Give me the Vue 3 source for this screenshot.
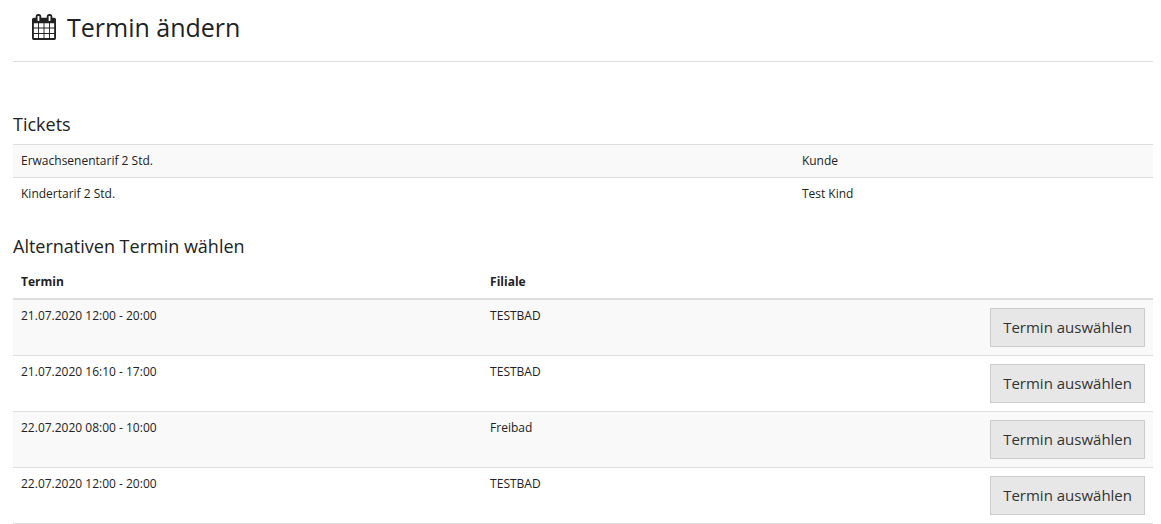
<script setup>
import { ref } from 'vue';

const tickets = ref([
  { id: 1, tarif: 'Erwachsenentarif 2 Std.', person: 'Kunde' },
  { id: 2, tarif: 'Kindertarif 2 Std.', person: 'Test Kind' }
]);

const termine = ref([
  { id: 1, zeit: '21.07.2020 12:00 - 20:00', filiale: 'TESTBAD' },
  { id: 2, zeit: '21.07.2020 16:10 - 17:00', filiale: 'TESTBAD' },
  { id: 3, zeit: '22.07.2020 08:00 - 10:00', filiale: 'Freibad' },
  { id: 4, zeit: '22.07.2020 12:00 - 20:00', filiale: 'TESTBAD' }
]);

const selectedTermin = ref(null);

const selectTermin = (termin) => {
  selectedTermin.value = termin.id;
};
</script>

<template>
  <main class="page">
    <header class="page-header">
      <svg class="calendar-icon" viewBox="64 0 1664 1792" aria-hidden="true">
        <path
          fill="currentColor"
          d="M192 1664h288v-288h-288v288zm352 0h320v-288h-320v288zm-352-352h288v-320h-288v320zm352 0h320v-320h-320v320zm-352-384h288v-288h-288v288zm736 736h320v-288h-320v288zm-384-736h320v-288h-320v288zm768 736h288v-288h-288v288zm-384-352h320v-320h-320v320zm-352-864v-288q0-13-9.500-22.500t-22.500-9.500h-64q-13 0-22.500 9.500t-9.500 22.500v288q0 13 9.500 22.500t22.500 9.500h64q13 0 22.500-9.500t9.500-22.500zm736 864h288v-320h-288v320zm-384-384h320v-288h-320v288zm384 0h288v-288h-288v288zm32-480v-288q0-13-9.500-22.500t-22.500-9.500h-64q-13 0-22.500 9.500t-9.500 22.500v288q0 13 9.500 22.500t22.500 9.500h64q13 0 22.500-9.500t9.500-22.500zm384-64v1280q0 52-38 90t-90 38h-1408q-52 0-90-38t-38-90v-1280q0-52 38-90t90-38h128v-96q0-66 47-113t113-47h64q66 0 113 47t47 113v96h384v-96q0-66 47-113t113-47h64q66 0 113 47t47 113v96h128q52 0 90 38t38 90z"
        />
      </svg>
      <h1>Termin ändern</h1>
    </header>

    <section class="tickets">
      <h2>Tickets</h2>
      <table class="table">
        <colgroup>
          <col class="col-tarif">
          <col>
        </colgroup>
        <tbody>
          <tr v-for="ticket in tickets" :key="ticket.id">
            <td>{{ ticket.tarif }}</td>
            <td>{{ ticket.person }}</td>
          </tr>
        </tbody>
      </table>
    </section>

    <section class="termine">
      <h2>Alternativen Termin wählen</h2>
      <table class="table">
        <colgroup>
          <col class="col-termin">
          <col>
          <col class="col-action">
        </colgroup>
        <thead>
          <tr>
            <th scope="col">Termin</th>
            <th scope="col">Filiale</th>
            <td></td>
          </tr>
        </thead>
        <tbody>
          <tr v-for="termin in termine" :key="termin.id">
            <td>{{ termin.zeit }}</td>
            <td>{{ termin.filiale }}</td>
            <td class="action">
              <button type="button" class="btn" @click="selectTermin(termin)">Termin auswählen</button>
            </td>
          </tr>
        </tbody>
      </table>
    </section>
  </main>
</template>

<style>
body {
  background-color: #fff;
}
</style>

<style scoped>
.page {
  padding: 0 8px 0 13px;
  font-family: "Open Sans", "Noto Sans", sans-serif;
  font-size: 12px;
  line-height: 16px;
  color: #222;
}

.page-header {
  display: flex;
  align-items: center;
  gap: 11px;
  padding: 9px 19px 16px;
  border-bottom: 1px solid #ddd;
}

.calendar-icon {
  width: 24px;
  height: 26px;
}

h1 {
  margin: 0;
  font-size: 25px;
  font-weight: 400;
  line-height: 36px;
}

h2 {
  margin: 0 0 8px;
  font-size: 18px;
  font-weight: 400;
  line-height: 24px;
}

.tickets {
  margin-top: 50px;
}

.termine {
  margin-top: 24px;
}

.table {
  width: 100%;
  table-layout: fixed;
  border-collapse: separate;
  border-spacing: 0;
}

.table th,
.table td {
  padding: 8px;
  text-align: left;
  vertical-align: top;
}

.table th {
  font-weight: 700;
}

.table thead th,
.table thead td {
  border-bottom: 2px solid #ddd;
}

.table tbody tr:nth-child(odd) {
  background-color: #f9f9f9;
}

.tickets tbody td {
  border-top: 1px solid #ddd;
}

.termine tbody td {
  border-bottom: 1px solid #ddd;
}

.col-tarif {
  width: 68.5%;
}

.col-termin {
  width: 41.15%;
}

.col-action {
  width: 180px;
}

.table .action {
  text-align: right;
}

.btn {
  display: inline-block;
  padding: 8px 12px;
  border: 1px solid #ccc;
  border-radius: 0;
  background-color: #e7e7e7;
  color: #333;
  font-family: inherit;
  font-size: 15px;
  line-height: 21px;
  white-space: nowrap;
  vertical-align: top;
  cursor: pointer;
}

.btn:hover {
  background-color: #dadada;
}
</style>
